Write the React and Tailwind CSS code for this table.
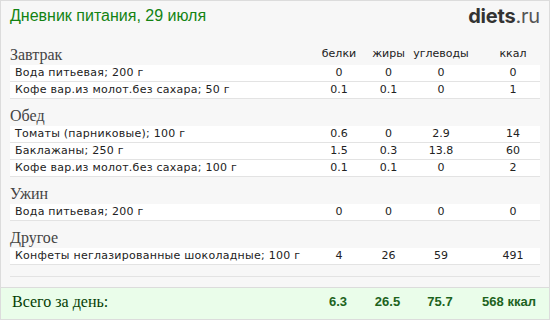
import React from 'react';

const sections = [
  {
    title: 'Завтрак',
    items: [
      ['Вода питьевая; 200 г', '0', '0', '0', '0'],
      ['Кофе вар.из молот.без сахара; 50 г', '0.1', '0.1', '0', '1'],
    ],
  },
  {
    title: 'Обед',
    items: [
      ['Томаты (парниковые); 100 г', '0.6', '0', '2.9', '14'],
      ['Баклажаны; 250 г', '1.5', '0.3', '13.8', '60'],
      ['Кофе вар.из молот.без сахара; 100 г', '0.1', '0.1', '0', '2'],
    ],
  },
  {
    title: 'Ужин',
    items: [['Вода питьевая; 200 г', '0', '0', '0', '0']],
  },
  {
    title: 'Другое',
    items: [['Конфеты неглазированные шоколадные; 100 г', '4', '26', '59', '491']],
  },
];

const Cols = ({ values, className = '' }) => (
  <div className={`flex ${className}`}>
    <div className="w-[50px] text-center">{values[0]}</div>
    <div className="w-[49px] text-center">{values[1]}</div>
    <div className="w-[56px] text-center">{values[2]}</div>
    <div className="ml-[17px] w-[54px] text-center">{values[3]}</div>
  </div>
);

const Row = ({ item }) => (
  <div className="flex h-[17px] items-center border-b border-[#e3e3e3] bg-white pl-[5px] font-['DejaVu_Sans',sans-serif] text-[11px] tracking-[0.25px] text-[#222]">
    <div className="flex-1">{item[0]}</div>
    <Cols values={item.slice(1)} className="tracking-normal" />
  </div>
);

export default function App() {
  return (
    <div className="flex h-[320px] w-[550px] flex-col border border-[#dcdcdc] bg-[#f7f7f7]">
      {/* Header */}
      <div className="flex h-[36px] items-start justify-between px-[9px] pt-[5px]">
        <div className="font-['Liberation_Sans',sans-serif] text-[16px] leading-[20px] text-[#138313]">
          Дневник питания, 29 июля
        </div>
        <div className="font-['Inter',sans-serif] text-[20px] leading-[20px] tracking-[-0.2px] text-[#333]">
          <span className="font-bold">diets</span>
          <span className="text-[#555]">.ru</span>
        </div>
      </div>

      {/* Table */}
      <div className="mx-[9px]">
        {sections.map((s, i) => (
          <div key={s.title}>
            <div className={`flex items-end ${i === 0 ? 'h-[28px]' : 'h-[27px]'}`}>
              <div className="flex-1 font-['Liberation_Serif',serif] text-[16px] leading-[20px] text-[#444]">
                {s.title}
              </div>
              {i === 0 && (
                <Cols
                  values={['белки', 'жиры', 'углеводы', 'ккал']}
                  className="pb-[5px] font-['DejaVu_Sans',sans-serif] text-[11px] leading-[13px] text-[#222]"
                />
              )}
            </div>
            {s.items.map((item, j) => (
              <Row key={j} item={item} />
            ))}
          </div>
        ))}
        <div className="h-[12px] border-b border-[#e3e3e3]" />
      </div>

      {/* Totals */}
      <div className="mt-auto flex h-[32px] items-center border-t border-[#dcdcdc] bg-[#eafdea] pb-[3px] pl-[11px] pr-[10px]">
        <div className="flex-1 font-['Liberation_Serif',serif] text-[16px] text-[#043d04]">
          Всего за день:
        </div>
        <Cols
          values={['6.3', '26.5', '75.7', '568 ккал']}
          className="font-['Liberation_Sans',sans-serif] text-[13px] font-bold text-[#1d631d] [&>div:last-child]:w-[60px] [&>div:last-child]:ml-[11px]"
        />
      </div>
    </div>
  );
}
